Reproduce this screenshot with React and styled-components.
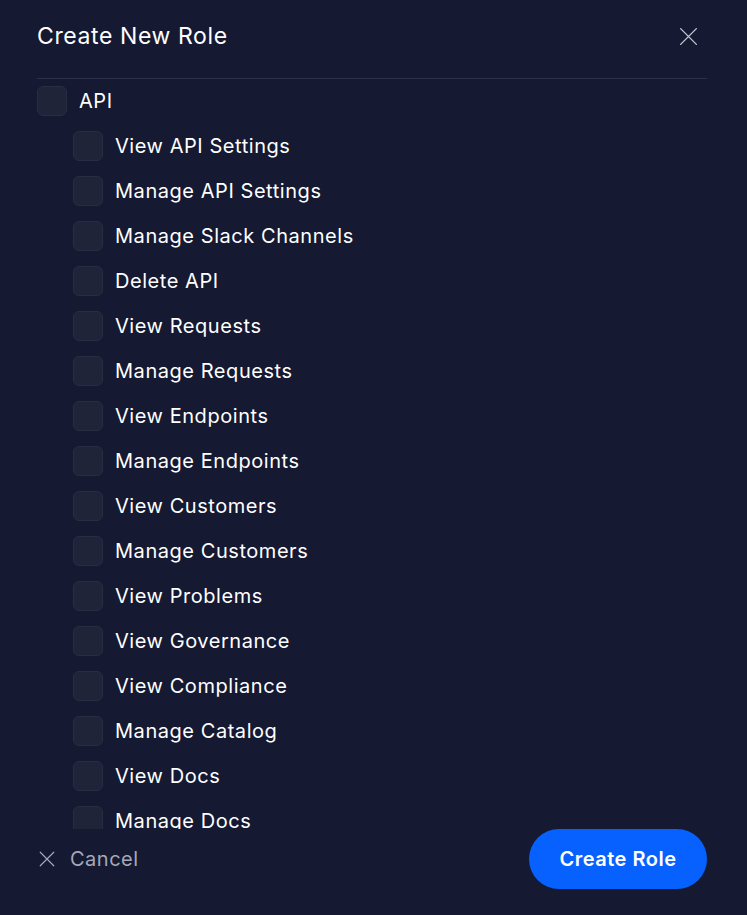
import React, {useState} from 'react';
import styled, {createGlobalStyle} from "styled-components";

const GlobalStyle = createGlobalStyle`
    html, body {
        margin: 0;
        background-color: #151932;
    }
    * {
        box-sizing: border-box;
    }
`

const Dialog = styled.div`
    width: 747px;
    height: 915px;
    background-color: #151932;
    padding: 0 40px 26px 37px;
    display: flex;
    flex-direction: column;
    font-family: Inter, "Noto Sans", sans-serif;
    color: #ffffff;
`
const Header = styled.div`
    height: 79px;
    display: flex;
    align-items: flex-start;
    justify-content: space-between;
    padding-top: 22px;
    border-bottom: 1px solid #2d3148;
    h2 {
        margin: 0;
        font-size: 23px;
        font-weight: 400;
        line-height: 28px;
        letter-spacing: 0.6px;
    }
`
const IconButton = styled.button`
    background: transparent;
    border: none;
    padding: 0;
    margin: 0 5px 0 0;
    width: 28px;
    height: 28px;
    display: flex;
    align-items: center;
    justify-content: center;
    color: #c4c6d2;
    cursor: pointer;
`
const List = styled.div`
    height: 750px;
    overflow: hidden;
    padding-top: 7px;
    display: flex;
    flex-direction: column;
    gap: 15px;
`
const Row = styled.label`
    display: flex;
    align-items: center;
    gap: 12px;
    padding-left: ${p => p.$indent ? '36px' : '0'};
    font-size: 20px;
    line-height: 30px;
    letter-spacing: 0.55px;
    flex-shrink: 0;
    cursor: pointer;
`
const Box = styled.span`
    width: 30px;
    height: 30px;
    border-radius: 6px;
    background-color: ${p => p.$checked ? '#0a62ff' : '#1f2439'};
    border: 1px solid #282d43;
    flex-shrink: 0;
`
const Footer = styled.div`
    display: flex;
    align-items: center;
    justify-content: space-between;
    height: 60px;
`
const Cancel = styled.button`
    display: flex;
    align-items: center;
    gap: 14px;
    background: transparent;
    border: none;
    padding: 0 0 0 1px;
    color: #a5a8b8;
    font-family: Inter, "Noto Sans", sans-serif;
    font-size: 20px;
    letter-spacing: 0.5px;
    cursor: pointer;
`
const Primary = styled.button`
    width: 178px;
    height: 60px;
    border-radius: 30px;
    border: none;
    background-color: #0661ff;
    color: #ffffff;
    font-family: Inter, "Noto Sans", sans-serif;
    font-size: 20px;
    font-weight: 600;
    letter-spacing: 0.5px;
    cursor: pointer;
`

const permissions = [
    'View API Settings', 'Manage API Settings', 'Manage Slack Channels', 'Delete API',
    'View Requests', 'Manage Requests', 'View Endpoints', 'Manage Endpoints',
    'View Customers', 'Manage Customers', 'View Problems', 'View Governance',
    'View Compliance', 'Manage Catalog', 'View Docs', 'Manage Docs', 'Manage Alerts',
]

const Cross = ({size, stroke}) => (
    <svg width={size} height={size} viewBox="0 0 24 24" fill="none" stroke="currentColor"
         strokeWidth={stroke} strokeLinecap="round">
        <path d="M3 3L21 21M21 3L3 21"/>
    </svg>
)

export default function App() {
    const [checked, setChecked] = useState({})
    const toggle = (name) => setChecked(c => ({...c, [name]: !c[name]}))

    return (
        <Dialog>
            <GlobalStyle/>
            <Header>
                <h2>Create New Role</h2>
                <IconButton aria-label="Close"><Cross size={21} stroke={1.6}/></IconButton>
            </Header>

            <List>
                <Row onClick={() => toggle('API')}>
                    <Box $checked={checked['API']}/>
                    <span>API</span>
                </Row>
                {permissions.map(name => (
                    <Row key={name} $indent onClick={() => toggle(name)}>
                        <Box $checked={checked[name]}/>
                        <span>{name}</span>
                    </Row>
                ))}
            </List>

            <Footer>
                <Cancel><Cross size={18} stroke={1.6}/>Cancel</Cancel>
                <Primary>Create Role</Primary>
            </Footer>
        </Dialog>
    );
}
